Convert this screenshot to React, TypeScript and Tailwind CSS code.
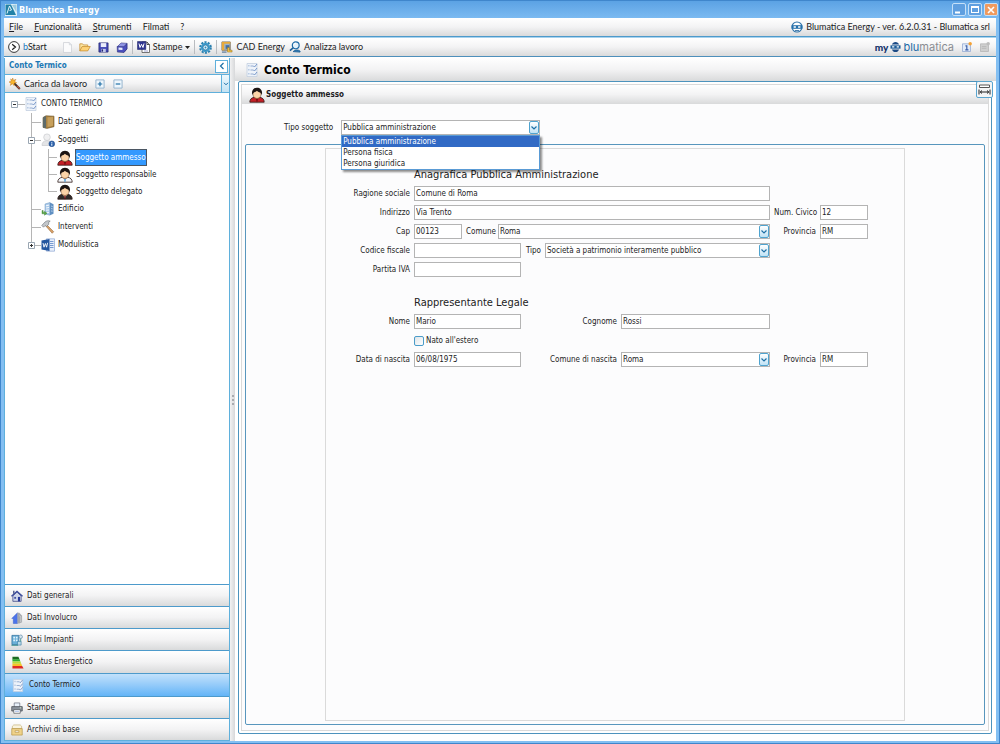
import type { ReactNode } from 'react';
import clsx from 'clsx';

const barBg = 'bg-linear-to-b from-white via-[#f3f3f4] to-[#d9dadb]';
const fieldBox = 'h-[15px] min-w-0 border border-[#b4b4b4] bg-white text-[8px] leading-[13px] text-[#1c1c24] outline-none';

/* ---------- icons ---------- */

function ChecklistIcon({ className = 'h-3 w-3' }: { className?: string }) {
  return (
    <svg viewBox="0 0 12 14" className={className} aria-hidden="true">
      <path d="M1 .5h10v13H1z" fill="#eef3fa" stroke="#c3cfe0" strokeWidth=".8" />
      <path d="M2 2h1.6v1.6H2zM2 6h1.6v1.6H2zM2 10h1.6v1.6H2z" fill="#b9cbe4" />
      <path d="M4.5 3h3M4.5 7h3M4.5 11h3" stroke="#8ba6cd" strokeWidth=".9" />
      <path d="M7.5 3l1 1 2.500-3M7.500 7l1 1 2.500-3M7.500 11l1 1 2.500-3" fill="none" stroke="#6d8fc4" strokeWidth=".9" />
    </svg>
  );
}

function PersonIcon({ body, shirt, className = 'h-4 w-4' }: { body: string; shirt: string; className?: string }) {
  return (
    <svg viewBox="0 0 16 16" className={className} aria-hidden="true">
      <path d="M.8 15.200c0-3 1.700-4.400 4.400-4.900h5.600c2.700.5 4.400 1.900 4.400 4.900z" fill={body} stroke="#33201c" strokeWidth=".8" />
      <path d="M5.600 10.200L8 14l2.400-3.800z" fill={shirt} />
      <path d="M8 11.500l-.8 1 .5 2.700h.6l.5-2.700z" fill={body === '#f4f6fa' ? '#3c8fd0' : '#7a0d12'} />
      <ellipse cx="8" cy="7.300" rx="4" ry="4.300" fill="#fbd3a8" stroke="#5b3a22" strokeWidth=".5" />
      <path d="M3.200 8.300C2.200 3.500 4.400.7 8 .7s5.900 2.800 4.800 7.600c-.4-1.600-.9-2.400-1.700-2.900C9.800 5.300 8.500 4.600 7.800 3.800 7 4.800 6 5.300 4.900 5.400c-.8.500-1.300 1.300-1.700 2.900z" fill="#1c1412" />
      <path d="M5.500 10.600Q8 12.300 10.500 10.600" stroke="#b57a4a" strokeWidth=".6" fill="none" />
    </svg>
  );
}

function UserGroupIcon() {
  return (
    <svg viewBox="0 0 14 14" className="h-3.5 w-3.5" aria-hidden="true">
      <path d="M1 12.500c0-3 1.500-4.500 4-4.800h2c2.500.3 4 1.800 4 4.800z" fill="#e3e4e6" stroke="#c2c4c8" strokeWidth=".6" />
      <circle cx="6" cy="4.200" r="3.300" fill="#f0f0f1" stroke="#c2c4c8" strokeWidth=".6" />
      <circle cx="10.800" cy="10.800" r="2.900" fill="#2c63ad" stroke="#1c4580" strokeWidth=".5" />
      <path d="M10.800 9v.8M10.800 10.500v2.200" stroke="#fff" strokeWidth="1" />
    </svg>
  );
}

function BookIcon() {
  return (
    <svg viewBox="0 0 14 14" className="h-3.5 w-3.5" aria-hidden="true">
      <path d="M2 2.500L5 .8l8 .4v10.500L6 13.400l-4-1z" fill="#a98242" stroke="#6f5425" strokeWidth=".6" />
      <path d="M5 .8v12.400L2 12.400V2.500z" fill="#5e6b6a" />
      <path d="M6.500 2.200l5.500-.2v8.800l-5.500 1.300z" fill="#c7a05c" />
    </svg>
  );
}

function BuildingIcon() {
  return (
    <svg viewBox="0 0 14 14" className="h-3.5 w-3.5" aria-hidden="true">
      <path d="M4 2l5-1.500v12.700L4 12z" fill="#a9c9ea" stroke="#6c94bd" strokeWidth=".5" />
      <path d="M9 .5l3.500 1.800v9.500L9 13.200z" fill="#5f8fc2" />
      <path d="M5 3.800l3-.7M5 6l3-.5M5 8.200l3-.2M5 10.400h3" stroke="#fff" strokeWidth=".9" />
      <path d="M10 4l1.700.6M10 6.500l1.700.4M10 9l1.700.2" stroke="#d5e5f5" strokeWidth=".7" />
      <path d="M1 8.500v3.300h2.500v1.500L6 11.200 3.500 9.300v1.200H2.200v-2z" fill="#59a846" stroke="#3b7a2d" strokeWidth=".4" />
    </svg>
  );
}

function HammerIcon() {
  return (
    <svg viewBox="0 0 14 14" className="h-3.5 w-3.5" aria-hidden="true">
      <path d="M5.500 4.500l7.200 7.200-1.500 1.600L4.800 6z" fill="#d9a066" stroke="#8a5a2b" strokeWidth=".5" />
      <path d="M.8 5.400L4 2C5.800.5 7.600.5 9.200 1.200L7.600 2.400l.2 1.800L5.500 6.600 4.200 5.500 2.500 7.200z" fill="#c3c7cb" stroke="#6a7076" strokeWidth=".6" />
    </svg>
  );
}

function WordIcon() {
  return (
    <svg viewBox="0 0 14 14" className="h-3.5 w-3.5" aria-hidden="true">
      <path d="M5.500.8h8v12.400h-8z" fill="#e8effa" stroke="#7c9bcd" strokeWidth=".6" />
      <path d="M9 3.500h3.500M9 5.500h3.500M9 7.500h3.500M9 9.500h3.500" stroke="#5b85c7" strokeWidth=".8" />
      <path d="M.5 2.400l8-1.400v12l-8-1.400z" fill="#24569f" />
      <path d="M2 5l1 4.200L4.400 5.500l1.200 3.700 1-4.400" fill="none" stroke="#fff" strokeWidth=".9" />
    </svg>
  );
}

function AppIcon() {
  return (
    <svg viewBox="0 0 12 12" className="h-3 w-3" aria-hidden="true">
      <path d="M0 0h12v12H0z" fill="#dff0f8" />
      <path d="M.5.5H6L11 11H.5z" fill="#2282a8" />
      <path d="M2 9.500L4.500 2l2 4-2 .5" fill="none" stroke="#e7f6fb" strokeWidth="1" />
      <path d="M7 1l4.500 7V.5z" fill="#9ccadd" />
    </svg>
  );
}

function StartIcon() {
  return (
    <svg viewBox="0 0 12 12" className="h-3 w-3" aria-hidden="true">
      <circle cx="6" cy="6" r="5.400" fill="#fff" stroke="#222" strokeWidth=".9" />
      <path d="M4.200 3.300L7.300 6 4.200 8.700M6 4.700L7.500 6 6 7.300" fill="none" stroke="#222" strokeWidth="1.200" />
    </svg>
  );
}

function NewFileIcon() {
  return (
    <svg viewBox="0 0 10 12" className="h-[11px] w-[9px]" aria-hidden="true">
      <path d="M.5.5H7L9.500 3v8.500h-9z" fill="#fbfbfc" stroke="#c9ccd2" strokeWidth=".8" />
      <path d="M7 .5V3h2.500" fill="#e3e7ee" stroke="#c9ccd2" strokeWidth=".6" />
    </svg>
  );
}

function OpenIcon() {
  return (
    <svg viewBox="0 0 13 11" className="h-2.5 w-3" aria-hidden="true">
      <path d="M.8 9.800V2h3l1 1.200H9.500V5" fill="#fbe6a4" stroke="#c48a2e" strokeWidth=".8" />
      <path d="M.8 9.800L3.300 5h9L9.500 9.800z" fill="#fdd277" stroke="#c48a2e" strokeWidth=".8" />
    </svg>
  );
}

function SaveIcon() {
  return (
    <svg viewBox="0 0 12 12" className="h-[11px] w-[11px]" aria-hidden="true">
      <path d="M1 1h10v10H1z" fill="#4348b5" stroke="#24286f" strokeWidth=".8" />
      <path d="M3 1.200h6v4.300H3z" fill="#e9edfb" />
      <path d="M3.500 7.500h5V11h-5z" fill="#c2c8ea" />
      <path d="M4 8h1.500v2.500H4z" fill="#24286f" />
    </svg>
  );
}

function SaveAllIcon() {
  return (
    <svg viewBox="0 0 12 12" className="h-[11px] w-3" aria-hidden="true">
      <path d="M1 5l4-4 6.500.5v6L8 11.500" fill="#8f94e3" stroke="#2a2e80" strokeWidth=".6" />
      <path d="M.7 4.800l7.300.4 3.300-3.500v6L8 11.500l-7-.5z" fill="#4b50bd" stroke="#24286f" strokeWidth=".6" />
      <path d="M2.200 6l4.300.3v2.400l-4.300-.3z" fill="#e9edfb" />
    </svg>
  );
}

function PrintDocIcon() {
  return (
    <svg viewBox="0 0 13 12" className="h-3 w-[13px]" aria-hidden="true">
      <path d="M5 1h5l2.500 2.500v8H5z" fill="#fff" stroke="#555" strokeWidth=".8" />
      <path d="M10 1v2.500h2.500" fill="none" stroke="#222" strokeWidth=".8" />
      <path d="M.5.500h8.300v8H.5z" fill="#2f3590" stroke="#191d5e" strokeWidth=".5" />
      <path d="M2 2.500l1 4 1.500-3.200L6 6.500l1-4" fill="none" stroke="#fff" strokeWidth="1" />
      <path d="M7 10h4" stroke="#8b90c9" strokeWidth=".8" />
    </svg>
  );
}

function GearIcon() {
  return (
    <svg viewBox="0 0 14 14" className="h-[13px] w-[13px]" aria-hidden="true">
      <circle cx="7" cy="7" r="5.800" fill="none" stroke="#2a7fae" strokeWidth="2" strokeDasharray="2.300 1.340" />
      <circle cx="7" cy="7" r="5" fill="#3f9aca" />
      <circle cx="7" cy="7" r="2.700" fill="#d9eef8" stroke="#1f6b99" strokeWidth=".7" />
      <circle cx="7" cy="7" r="1" fill="#2b86b8" />
    </svg>
  );
}

function CadIcon() {
  return (
    <svg viewBox="0 0 13 13" className="h-3 w-3" aria-hidden="true">
      <path d="M1 1h9v9H1z" fill="#9fb4c8" stroke="#6c5a3c" strokeWidth=".8" />
      <path d="M1 1h2.500v9H1zM1 1h9v2H1z" fill="#e8a93a" />
      <path d="M5 4.500h4v4H5z" fill="#456f9e" />
      <path d="M7 12V7h2v3h3v2z" fill="#f3c243" stroke="#8d6a1b" strokeWidth=".5" />
      <path d="M1 12h5" stroke="#4c6d93" strokeWidth="1.200" />
    </svg>
  );
}

function AnalyzeIcon() {
  return (
    <svg viewBox="0 0 13 13" className="h-3 w-3" aria-hidden="true">
      <path d="M4.500 7.500L1 10.500" fill="none" stroke="#1d5f98" strokeWidth="1.700" />
      <path d="M4.500 11.500c1.500-2.300 5.500-2.300 7.500-.5v1z" fill="#2f7fb9" stroke="#1d5f98" strokeWidth="1" />
      <circle cx="7.300" cy="4.700" r="3.700" fill="#e5f2fb" stroke="#1d6aa6" strokeWidth="1.300" />
      <path d="M5.500 4a2 2 0 012-1.600" fill="none" stroke="#fff" strokeWidth="1" />
    </svg>
  );
}

function WandIcon() {
  return (
    <svg viewBox="0 0 13 13" className="h-3 w-3" aria-hidden="true">
      <path d="M4.500 4.500l7.200 7.300" stroke="#4a3328" strokeWidth="2.300" />
      <path d="M8.500 8.500l3 3.100" stroke="#c0573f" strokeWidth="1.300" />
      <path d="M4 0l.8 2.500L7.500 1.500 6 3.700 8.300 5 5.600 5.500 5.500 8.300 3.700 6.200 1.500 8 2.200 5.300 0 4.300l2.500-.7L1.800 1l1.700 1.500z" fill="#f8b62d" stroke="#c2741a" strokeWidth=".5" />
    </svg>
  );
}

function BlumaticaIcon() {
  return (
    <svg viewBox="0 0 12 12" className="h-3 w-3" aria-hidden="true">
      <circle cx="6" cy="6" r="5" fill="#fff" stroke="#2a70a8" strokeWidth="1.100" />
      <path d="M.6 4.200h10.800v3.600H.6z" fill="#2470ab" />
      <path d="M2.600 5.200h2.300v1.500H2.600zM7.100 5.200h2.300v1.500H7.100z" fill="#fff" />
      <path d="M4 9.500h4" stroke="#1d609a" strokeWidth=".8" />
    </svg>
  );
}

function GlobeLogo() {
  return (
    <svg viewBox="0 0 12 12" className="h-3 w-[11px]" aria-hidden="true">
      <path d="M2 3.300C2.800 1.500 4.200.5 6 .5s3.200 1 4 2.800z" fill="#1b4a85" />
      <path d="M.5 4.200h11v3.600H.5z" fill="#1b5b98" />
      <path d="M2.300 5.200h2.400v1.300H2.300zM7.300 5.200h2.400v1.300H7.300z" fill="#fff" />
      <path d="M2 8.700h8c-.8 1.800-2.200 2.800-4 2.800S2.800 10.500 2 8.700z" fill="#1b4a85" />
    </svg>
  );
}

function NoticeIcon({ muted = false }: { muted?: boolean }) {
  const main = muted ? '#b5b5b5' : '#3c5fa8';
  return (
    <svg viewBox="0 0 11 11" className="h-2.5 w-2.5" aria-hidden="true">
      <path d="M.5 2h8.800v8.500H.5z" fill={muted ? '#cfcfcf' : '#e3ecf9'} stroke={muted ? '#b0b0b0' : '#8ba3cf'} strokeWidth=".8" />
      {muted ? (
        <path d="M2 5h5M2 7h5" stroke={main} strokeWidth=".9" />
      ) : (
        <path d="M3.800 4.300h1.500v4.400M3.600 8.700h3.500" stroke={main} strokeWidth="1.300" fill="none" />
      )}
      <circle cx="9" cy="2" r="1.900" fill={muted ? '#bcbcbc' : '#f5a133'} />
    </svg>
  );
}

function HouseIcon() {
  return (
    <svg viewBox="0 0 13 13" className="h-3 w-3" aria-hidden="true">
      <path d="M2 6.500v5.800h9V6.500L6.500 2.300z" fill="#cfd6ea" stroke="#3a4384" strokeWidth=".8" />
      <path d="M.5 6.800L6.500 1.300l6 5.500" fill="none" stroke="#3a4b9c" strokeWidth="1.300" />
      <path d="M2.200.8h1.600v2.500L2.200 4.600z" fill="#54608f" />
      <path d="M7.500 7.500h2.300v4.800H7.500z" fill="#26389b" />
      <path d="M3.500 7.500h2v2h-2z" fill="#4455a5" />
    </svg>
  );
}

function EnvelopeHouseIcon() {
  return (
    <svg viewBox="0 0 13 13" className="h-3 w-3" aria-hidden="true">
      <path d="M7 .8v11.700H2.500V7H.8z" fill="#4c74ea" stroke="#3157c8" strokeWidth=".5" />
      <path d="M7 .8h2l3 3.200v7l-3 1.500H7z" fill="#a5a8ac" />
      <path d="M9 4l1.600 1v6" stroke="#d7d9dc" strokeWidth=".8" fill="none" />
    </svg>
  );
}

function PlantIcon() {
  return (
    <svg viewBox="0 0 13 13" className="h-3 w-3" aria-hidden="true">
      <path d="M1 1.500h7.500v10H1z" fill="#6bb0d8" stroke="#2d6f9c" strokeWidth=".8" />
      <path d="M2.500 3h1.800v1.800H2.500zM5.300 3h1.800v1.800H5.300zM2.500 6h1.800v1.800H2.500zM5.300 6h1.800v1.800H5.300z" fill="#e4f4fc" />
      <path d="M7 8h4v4H7z" fill="#b7dbe9" stroke="#2d6f9c" strokeWidth=".6" />
      <circle cx="10.500" cy="3" r="1.900" fill="#d4e4ef" stroke="#5d87a5" strokeWidth=".7" />
      <path d="M10.500 5v3M.5 12.300h7" stroke="#2d8a86" strokeWidth=".9" />
    </svg>
  );
}

function EnergyClassIcon() {
  return (
    <svg viewBox="0 0 14 14" className="h-[13px] w-[14px]" aria-hidden="true">
      <path d="M1 .8h6.500l1.200 3H1z" fill="#1c6b22" />
      <path d="M1 3.500h7.600l1 2.500H1z" fill="#2fae35" />
      <path d="M1 6h8.600l.9 2.300H1z" fill="#b7dc35" />
      <path d="M1 8.300h9.500l1 2.500H1z" fill="#f6c12a" />
      <path d="M1 10.800h10.500l1.500 2.700H1z" fill="#dd2a24" />
    </svg>
  );
}

function PrinterIcon() {
  return (
    <svg viewBox="0 0 13 13" className="h-3 w-3" aria-hidden="true">
      <path d="M3.500 1h6v5h-6z" fill="#e9f1fa" stroke="#5b6270" strokeWidth=".7" />
      <path d="M.8 5h11.400v4.800H.8z" fill="#8b929c" stroke="#454a52" strokeWidth=".8" />
      <path d="M3 8.200h7v4H3z" fill="#fff" stroke="#454a52" strokeWidth=".7" />
      <path d="M4.300 10h4.400" stroke="#6b8fd6" strokeWidth=".7" />
      <path d="M9.500 6.300h1.500" stroke="#dff3c9" strokeWidth=".9" />
    </svg>
  );
}

function ArchiveIcon() {
  return (
    <svg viewBox="0 0 13 13" className="h-3 w-3" aria-hidden="true">
      <path d="M1.500 5V2.500L3 1h7l1.500 1.500V5z" fill="#f9f3de" stroke="#c2ad6d" strokeWidth=".7" />
      <path d="M.8 5h11.400v7H.8z" fill="#efd28a" stroke="#b3903c" strokeWidth=".7" />
      <path d="M4.500 7.300h4v1.700h-4z" fill="#fff" stroke="#a8822c" strokeWidth=".6" />
    </svg>
  );
}

function PlusMinusIcon({ plus = false }: { plus?: boolean }) {
  return (
    <svg viewBox="0 0 11 11" className="h-2.5 w-2.5" aria-hidden="true">
      <path d="M1 1h9v9H1z" fill="#eef6fc" stroke="#8fb0cb" strokeWidth="1" />
      <path d={plus ? 'M3 5.500h5M5.500 3v5' : 'M3 5.500h5'} stroke="#1d6fa5" strokeWidth="1.300" />
    </svg>
  );
}

/* ---------- small controls ---------- */

function ComboArrow() {
  return (
    <span className="pointer-events-none absolute top-px right-px flex h-[13px] w-2.5 items-center justify-center rounded-xs border border-[#4fa3cf] bg-linear-to-b from-white to-[#bfe2f5]">
      <svg viewBox="0 0 8 6" className="h-1.5 w-2 shrink-0" aria-hidden="true">
        <path d="M1.500 1.500L4 4l2.500-2.500" fill="none" stroke="#1d6fa5" strokeWidth="1.200" />
      </svg>
    </span>
  );
}

type FieldProps = { id: string; label: string; labelClass?: string; className?: string; value?: string };

function Field({ id, label, labelClass, className, value = '' }: FieldProps) {
  return (
    <>
      <label htmlFor={id} className={clsx('shrink-0 text-right whitespace-nowrap', labelClass)}>{label}</label>
      <input id={id} type="text" defaultValue={value} className={clsx(fieldBox, 'px-px', className)} />
    </>
  );
}

function SelectField({ id, label, labelClass, className, value = '' }: FieldProps) {
  return (
    <>
      <label htmlFor={id} className={clsx('shrink-0 text-right whitespace-nowrap', labelClass)}>{label}</label>
      <div className={clsx('relative flex min-w-0', className)}>
        <select id={id} className={clsx(fieldBox, 'w-full appearance-none pl-px')}>
          <option>{value}</option>
        </select>
        <ComboArrow />
      </div>
    </>
  );
}

function FormRow({ children }: { children?: ReactNode }) {
  return <div className="flex h-[15px] items-center gap-1">{children}</div>;
}

/* ---------- tree ---------- */

function Expander({ open, label }: { open: boolean; label: string }) {
  return (
    <button type="button" aria-label={label} className="block h-[7px] w-[7px] shrink-0">
      <svg viewBox="0 0 7 7" className="h-[7px] w-[7px]">
        <path d="M.5.5h6v6h-6z" fill="#fff" stroke="#9aa6b2" />
        <path d={open ? 'M2 3.500h3' : 'M2 3.500h3M3.500 2v3'} stroke="#333" />
      </svg>
    </button>
  );
}

function Branch({ last = false, className }: { last?: boolean; className?: string }) {
  return (
    <span className={clsx('flex shrink-0 flex-col self-stretch', className)}>
      <span className="flex-1 border-b border-l border-[#b5b5b5]" />
      <span className={clsx('flex-1 border-[#b5b5b5]', !last && 'border-l')} />
    </span>
  );
}

type NodeProps = { icon: ReactNode; label: string; last?: boolean; open?: boolean; children?: ReactNode };

function TreeNode({ icon, label, last, open, children }: NodeProps) {
  return (
    <li>
      <div className="relative flex h-[18px] items-center pl-[26px]">
        <Branch last={last} className="w-2.5" />
        {open !== undefined && (
          <span className="absolute left-[23px]"><Expander open={open} label={label} /></span>
        )}
        {icon}
        <span className="ml-[3px]">{label}</span>
      </div>
      {children}
    </li>
  );
}

function TreeLeaf({ icon, label, last, selected }: NodeProps & { selected?: boolean }) {
  return (
    <li className="flex h-[17px] items-center pl-[26px]">
      <span className="w-[17px] shrink-0 self-stretch border-l border-[#b5b5b5]" />
      <Branch last={last} className="w-[9px]" />
      {icon}
      <span
        className={clsx(
          'ml-0.5 flex items-center self-stretch border',
          selected ? 'border-[#4b5663] bg-[#3399ff] text-white' : 'border-transparent'
        )}
      >
        {label}
      </span>
    </li>
  );
}

/* ---------- sections ---------- */

const menuItems = ['File', 'Funzionalità', 'Strumenti'];

function TitleBar() {
  const btn = 'flex h-[13px] w-[14px] items-center justify-center rounded-xs border border-[#c5e0f8]';
  return (
    <header className="flex h-[17px] shrink-0 items-center gap-0.5 bg-linear-to-b from-[#5ba2e4] to-[#7bbaf1] pr-px pl-1 text-[9px] font-bold text-white">
      <AppIcon />
      <h1 className="flex-1">Blumatica Energy</h1>
      <button type="button" aria-label="Riduci" className={clsx(btn, 'bg-[#5f9fe0]')}>
        <svg viewBox="0 0 8 8" className="h-2 w-2"><path d="M0 6.500h5" stroke="#fff" strokeWidth="2" /></svg>
      </button>
      <button type="button" aria-label="Ingrandisci" className={clsx(btn, 'bg-[#5f9fe0]')}>
        <span className="h-[7px] w-2 border border-t-2 border-white" />
      </button>
      <button type="button" aria-label="Chiudi" className={clsx(btn, 'bg-[#f09a5e]')}>
        <svg viewBox="0 0 8 8" className="h-2 w-2"><path d="M1 1l6 6M7 1L1 7" stroke="#fff" strokeWidth="1.600" /></svg>
      </button>
    </header>
  );
}

function MenuBar() {
  return (
    <nav className={clsx('flex h-[19px] shrink-0 items-center gap-[11px] border-b border-[#4d9acb] px-[5px]', barBg)}>
      {menuItems.map((item) => (
        <button key={item} type="button">
          <span className="underline">{item[0]}</span>
          {item.slice(1)}
        </button>
      ))}
      <button type="button">Filmati</button>
      <button type="button">?</button>
      <span className="ml-auto flex items-center gap-[3px] pr-px">
        <BlumaticaIcon />
        Blumatica Energy - ver. 6.2.0.31 - Blumatica srl
      </span>
    </nav>
  );
}

function Separator() {
  return <span className="h-3.5 w-px bg-[#b9bcc0]" />;
}

function ToolBar() {
  const item = 'flex items-center gap-[3px]';
  return (
    <div className={clsx('mt-px flex h-[19px] shrink-0 items-center border-b border-[#4d8fbb] px-1', barBg)}>
      <button type="button" className={item}>
        <StartIcon />
        <span><span className="text-[#1c75bc]">b</span>Start</span>
      </button>
      <div className="ml-4 flex items-center gap-[7px]">
        <button type="button" aria-label="Nuovo"><NewFileIcon /></button>
        <button type="button" aria-label="Apri"><OpenIcon /></button>
        <button type="button" aria-label="Salva"><SaveIcon /></button>
        <button type="button" aria-label="Salva tutto"><SaveAllIcon /></button>
      </div>
      <span className="mx-1 flex"><Separator /></span>
      <button type="button" className={clsx(item, 'mr-1')}>
        <PrintDocIcon />
        Stampe
        <svg viewBox="0 0 5 3" className="h-[3px] w-[5px]"><path d="M0 0h5L2.500 3z" fill="#222" /></svg>
      </button>
      <Separator />
      <button type="button" aria-label="Impostazioni" className="mx-1"><GearIcon /></button>
      <Separator />
      <button type="button" className={clsx(item, 'ml-1')}><CadIcon />CAD Energy</button>
      <button type="button" className={clsx(item, 'ml-1')}><AnalyzeIcon />Analizza lavoro</button>
      <div className="ml-auto flex items-center gap-0.5 pr-0.5">
        <span className="text-[10px] font-black text-[#14336b]">my</span>
        <GlobeLogo />
        <span className="font-[Inter] text-[11px] leading-3 text-[#8a8d92]">
          <span className="text-[#1d6aa6]">blu</span>matica
        </span>
        <button type="button" aria-label="Notifiche" className="ml-1.5"><NoticeIcon /></button>
        <button type="button" aria-label="Messaggi" className="ml-1.5"><NoticeIcon muted /></button>
      </div>
    </div>
  );
}

const navItems = [
  { label: 'Dati generali', icon: <HouseIcon />, tall: false },
  { label: 'Dati Involucro', icon: <EnvelopeHouseIcon />, tall: false },
  { label: 'Dati Impianti', icon: <PlantIcon />, tall: false },
  { label: 'Status Energetico', icon: <EnergyClassIcon />, tall: true },
  { label: 'Conto Termico', icon: <ChecklistIcon className="h-[13px] w-[14px]" />, tall: true },
  { label: 'Stampe', icon: <PrinterIcon />, tall: false },
  { label: 'Archivi di base', icon: <ArchiveIcon />, tall: false },
];

function Sidebar() {
  return (
    <aside className="flex w-[226px] shrink-0 flex-col border-x border-[#5fb0dc] bg-white">
      <div className={clsx('flex h-4 items-center justify-between pr-px pl-1', barBg)}>
        <h2 className="text-[8px] font-bold text-[#1b78b4]">Conto Termico</h2>
        <button type="button" aria-label="Comprimi pannello" className="flex h-[13px] w-[13px] items-center justify-center border border-[#5fb0dc] bg-white">
          <svg viewBox="0 0 6 8" className="h-2 w-1.5"><path d="M4.500 1L1.500 4l3 3" fill="none" stroke="#1d6fa5" strokeWidth="1.200" /></svg>
        </button>
      </div>
      <div className={clsx('flex h-[19px] items-center gap-2 border-y border-[#5fb0dc] pl-1', barBg)}>
        <button type="button" className="flex items-center gap-[3px] font-[Lato] text-[9px]"><WandIcon />Carica da lavoro</button>
        <button type="button" aria-label="Espandi tutto"><PlusMinusIcon plus /></button>
        <button type="button" aria-label="Comprimi tutto"><PlusMinusIcon /></button>
        <button type="button" aria-label="Altro" className="ml-auto flex h-full w-2 items-center justify-center border-l border-[#5fb0dc] bg-linear-to-b from-[#eef8fd] to-[#c3e2f3]">
          <svg viewBox="0 0 6 4" className="h-1 w-1.5"><path d="M1 .8l2 2 2-2" fill="none" stroke="#1d6fa5" strokeWidth="1" /></svg>
        </button>
      </div>
      <ul className="flex-1 pt-0.5">
        <li>
          <div className="flex h-[18px] items-center pl-1.5">
            <Expander open label="CONTO TERMICO" />
            <span className="w-[7px] border-t border-[#b5b5b5]" />
            <ChecklistIcon className="h-3.5 w-3" />
            <span className="ml-1">CONTO TERMICO</span>
          </div>
          <ul>
            <TreeNode icon={<BookIcon />} label="Dati generali" />
            <TreeNode icon={<UserGroupIcon />} label="Soggetti" open>
              <ul>
                <TreeLeaf icon={<PersonIcon body="#c41f26" shirt="#7a0d12" />} label="Soggetto ammesso" selected />
                <TreeLeaf icon={<PersonIcon body="#f4f6fa" shirt="#cfe3f5" />} label="Soggetto responsabile" />
                <TreeLeaf icon={<PersonIcon body="#2d2b2a" shirt="#d5d2c8" />} label="Soggetto delegato" last />
              </ul>
            </TreeNode>
            <TreeNode icon={<BuildingIcon />} label="Edificio" />
            <TreeNode icon={<HammerIcon />} label="Interventi" />
            <TreeNode icon={<WordIcon />} label="Modulistica" open={false} last />
          </ul>
        </li>
      </ul>
      <nav className="flex flex-col border-b border-[#5fb0dc]">
        {navItems.map(({ label, icon, tall }) => (
          <button
            key={label}
            type="button"
            className={clsx(
              'flex items-center gap-1 border-t border-[#4d9acb] pl-1.5 text-left',
              tall ? 'h-[23px]' : 'h-[22px]',
              label === 'Conto Termico' ? 'bg-linear-to-b from-[#c2e1fb] to-[#62b4f7]' : barBg
            )}
          >
            {icon}
            {label}
          </button>
        ))}
      </nav>
    </aside>
  );
}

const subjectTypes = ['Pubblica amministrazione', 'Persona fisica', 'Persona giuridica'];

function SubjectTypeRow() {
  return (
    <div className="mt-4 flex h-[15px] items-center gap-2 pl-[42px]">
      <label htmlFor="tipo-soggetto">Tipo soggetto</label>
      <div className="relative flex w-[199px]">
        <select id="tipo-soggetto" className={clsx(fieldBox, 'w-full appearance-none pl-px')}>
          {subjectTypes.map((type) => <option key={type}>{type}</option>)}
        </select>
        <ComboArrow />
        <ul role="listbox" aria-label="Tipo soggetto" className="absolute top-[15px] left-0 z-10 w-full border border-[#5a9bd5] bg-white shadow-[2px_2px_2px_rgba(0,0,0,0.45)]">
          {subjectTypes.map((type, i) => (
            <li key={type} role="option" aria-selected={i === 0} className={clsx('h-[11px] px-px leading-[11px]', i === 0 && 'bg-[#316ac5] text-white')}>
              {type}
            </li>
          ))}
        </ul>
      </div>
    </div>
  );
}

function SubjectForm() {
  const heading = 'h-[18px] pl-[88px] text-[11px] leading-[22px] text-[#222]';
  return (
    <form className="mx-auto flex w-[580px] flex-1 flex-col gap-1 border border-[#dadada] pt-[15px]">
      <h3 className={heading}>Anagrafica Pubblica Amministrazione</h3>
      <FormRow>
        <Field id="ragione" label="Ragione sociale" labelClass="w-[84px]" className="w-[356px]" value="Comune di Roma" />
      </FormRow>
      <FormRow>
        <Field id="indirizzo" label="Indirizzo" labelClass="w-[84px]" className="w-[356px]" value="Via Trento" />
        <Field id="civico" label="Num. Civico" labelClass="w-[42px]" className="w-12" value="12" />
      </FormRow>
      <FormRow>
        <Field id="cap" label="Cap" labelClass="w-[84px]" className="w-12" value="00123" />
        <SelectField id="comune" label="Comune" labelClass="w-7" className="w-[272px]" value="Roma" />
        <Field id="provincia" label="Provincia" labelClass="w-[42px]" className="w-12" value="RM" />
      </FormRow>
      <FormRow>
        <Field id="codice" label="Codice fiscale" labelClass="w-[84px]" className="w-[107px]" />
        <SelectField id="tipo" label="Tipo" labelClass="w-4" className="w-[225px]" value="Società a patrimonio interamente pubblico" />
      </FormRow>
      <FormRow>
        <Field id="iva" label="Partita IVA" labelClass="w-[84px]" className="w-[107px]" />
      </FormRow>
      <h3 className={clsx(heading, 'mt-[11px]')}>Rappresentante Legale</h3>
      <FormRow>
        <Field id="nome" label="Nome" labelClass="w-[84px]" className="w-[107px]" value="Mario" />
        <Field id="cognome" label="Cognome" labelClass="w-[92px]" className="w-[149px]" value="Rossi" />
      </FormRow>
      <FormRow>
        <input id="estero" type="checkbox" className="ml-[88px] h-2.5 w-2.5 appearance-none rounded-xs border border-[#4a9cc9] bg-linear-to-br from-[#dfe5e9] to-white" />
        <label htmlFor="estero" className="-ml-0.5">Nato all'estero</label>
      </FormRow>
      <FormRow>
        <Field id="nascita" label="Data di nascita" labelClass="w-[84px]" className="w-[107px]" value="06/08/1975" />
        <SelectField id="comune-nascita" label="Comune di nascita" labelClass="w-[92px]" className="w-[149px]" value="Roma" />
        <Field id="provincia-nascita" label="Provincia" labelClass="w-[42px]" className="w-12" value="RM" />
      </FormRow>
    </form>
  );
}

export default function App() {
  return (
    <div className="flex h-screen flex-col border border-[#3f86cc] bg-[#83bff2] font-['DejaVu_Sans_Condensed','DejaVu_Sans',sans-serif] text-[8px] leading-3 text-[#1c1c24]">
      <TitleBar />
      <div className="mx-[3px] mb-0.5 flex min-h-0 flex-1 flex-col bg-white">
        <div className="flex flex-col bg-[#a8d3ee] font-[Lato] text-[9px]">
          <MenuBar />
          <ToolBar />
        </div>
        <div className="flex min-h-0 flex-1 pt-px">
          <Sidebar />
          <div className="flex w-[5px] shrink-0 flex-col items-center justify-center gap-0.5 bg-linear-to-r from-[#f2f2f3] to-[#d7d8da]">
            <span className="h-0.5 w-0.5 bg-[#a9abb0]" />
            <span className="h-0.5 w-0.5 bg-[#a9abb0]" />
            <span className="h-0.5 w-0.5 bg-[#a9abb0]" />
          </div>
          <main className="flex min-w-0 flex-1 flex-col">
            <div className={clsx('flex h-[23px] shrink-0 items-center gap-1.5 pl-[11px]', barBg)}>
              <ChecklistIcon className="h-3.5 w-3" />
              <h2 className="text-[12px] font-bold text-black">Conto Termico</h2>
            </div>
            <div className="relative mr-1 mb-[7px] ml-[3px] flex flex-1 flex-col rounded-xs border border-[#4d93bd] p-0.5">
              <button type="button" aria-label="Adatta larghezza" className="absolute -top-px -right-0.5 flex h-[17px] w-[17px] items-center justify-center rounded-xs border border-[#5aa5cf] bg-[#f4f5f6]">
                <svg viewBox="0 0 13 13" className="h-[13px] w-[13px]">
                  <path d="M1.500 2h10v2.500h-10z" fill="#fff" stroke="#555" />
                  <path d="M1 6.500v5M12 6.500v5M2 9h9M4 7.500L2.300 9 4 10.500M9 7.500L10.700 9 9 10.500" fill="none" stroke="#222" />
                </svg>
              </button>
              <section className="flex flex-1 flex-col border border-[#dadada] bg-[#fcfcfd]">
                <div className={clsx('flex h-[19px] shrink-0 items-center gap-px pl-[7px]', barBg)}>
                  <PersonIcon body="#c41f26" shirt="#7a0d12" />
                  <h3 className="font-bold">Soggetto ammesso</h3>
                </div>
                <SubjectTypeRow />
                <div className="mx-[3px] mt-[9px] mb-[5px] flex flex-1 flex-col rounded-xs border border-[#5796bd] p-[3px]">
                  <SubjectForm />
                </div>
              </section>
            </div>
          </main>
        </div>
      </div>
    </div>
  );
}
